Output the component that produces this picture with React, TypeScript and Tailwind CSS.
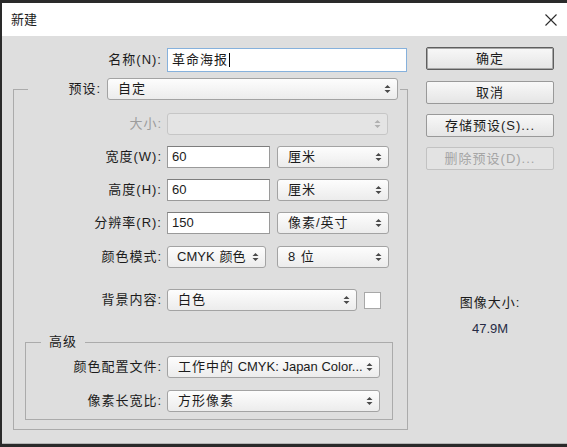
import React from 'react';

const Arrows = ({ disabled = false }: { disabled?: boolean }) => (
  <svg width="7" height="10" viewBox="0 0 7 10" className="shrink-0">
    <path d="M0.5 4 L3.5 1 L6.5 4Z M0.5 6 L3.5 9 L6.5 6Z" fill={disabled ? '#b0b0b0' : '#4a4a4a'} />
  </svg>
);

const Select = ({ className = '', children, disabled = false }: { className?: string; children?: React.ReactNode; disabled?: boolean }) => (
  <div
    className={`flex h-[22px] shrink-0 items-center justify-between rounded-[3px] border pl-[10px] pr-[6px] ${
      disabled
        ? 'border-[#c6c6c6] bg-[#e4e4e4]'
        : 'border-[#a3a3a3] bg-gradient-to-b from-[#fdfdfd] to-[#ececec]'
    } ${className}`}
  >
    <span className="truncate tracking-[1px]">{children}</span>
    <Arrows disabled={disabled} />
  </div>
);

const Input = ({ className = '', value }: { className?: string; value: string }) => (
  <div className={`flex h-[22px] shrink-0 items-center border border-[#9a9a9a] border-t-[#7d7d7d] bg-white pl-[4px] ${className}`}>
    {value}
  </div>
);

const Label = ({ className = '', children, muted = false }: { className?: string; children: React.ReactNode; muted?: boolean }) => (
  <div className={`shrink-0 text-right tracking-[1px] ${muted ? 'text-[#9c9c9c]' : ''} ${className}`}>{children}</div>
);

const Button = ({ children, primary = false, disabled = false, className = '' }: { children: React.ReactNode; primary?: boolean; disabled?: boolean; className?: string }) => (
  <div
    className={`flex h-[23px] w-[128px] items-center justify-center rounded-[2px] border tracking-[1px] ${
      disabled
        ? 'border-[#c2c2c2] bg-[#e3e3e3] text-[#a5a5a5]'
        : primary
        ? 'border-[#5e5e5e] bg-gradient-to-b from-[#f8f8f8] to-[#e5e5e5] shadow-[inset_0_0_0_1px_#a8a8a8]'
        : 'border-[#999999] bg-gradient-to-b from-[#f8f8f8] to-[#e5e5e5]'
    } ${className}`}
  >
    {children}
  </div>
);

export default function App() {
  return (
    <div className="h-[447px] w-[567px] bg-[#2a2a2a] pb-[3px] pl-[2px] pt-[3px] font-['Liberation_Sans','Noto_Sans_CJK_SC',sans-serif] text-[13px] text-[#1b1b1b]">
      <div className="flex h-full flex-col border-b border-[#b5b5b5] bg-[#dedede]">
        {/* title bar */}
        <div className="flex h-[33px] shrink-0 items-center justify-between bg-white pl-[9px] pr-[10px]">
          <span className="tracking-[0px]">新建</span>
          <svg width="12" height="12" viewBox="0 0 12 12">
            <path d="M0.5 0.5 L11.5 11.5 M11.5 0.5 L0.5 11.5" stroke="#2b2b2b" strokeWidth="1.1" />
          </svg>
        </div>

        <div className="flex pt-[11px]">
          {/* left column */}
          <div className="w-[406px]">
            <div className="mt-[1px] flex items-center">
              <Label className="w-[160px]">名称(N):</Label>
              <div className="ml-[5px] flex h-[24px] w-[240px] items-center border border-[#86b1dc] bg-white pl-[4px] tracking-[1px]">
                革命海报
                <span className="ml-[1px] inline-block h-[14px] w-[1px] bg-black" />
              </div>
            </div>

            <fieldset className="ml-[11px] mt-[6px] w-[395px] border border-[#ababab] pb-[9px] pt-[13px]">
              <legend className="ml-[14px] flex items-center px-[2px]">
                <Label className="w-[71px]">预设:</Label>
                <Select className="ml-[6px] w-[291px]">自定</Select>
              </legend>

              <div className="flex items-center">
                <Label muted className="w-[148px]">大小:</Label>
                <Select disabled className="ml-[5px] w-[221px]" />
              </div>

              <div className="mt-[11px] flex items-center">
                <Label className="w-[148px]">宽度(W):</Label>
                <Input className="ml-[5px] w-[103px]" value="60" />
                <Select className="ml-[7px] w-[112px]">厘米</Select>
              </div>

              <div className="mt-[11px] flex items-center">
                <Label className="w-[148px]">高度(H):</Label>
                <Input className="ml-[5px] w-[103px]" value="60" />
                <Select className="ml-[7px] w-[112px]">厘米</Select>
              </div>

              <div className="mt-[11px] flex items-center">
                <Label className="w-[148px]">分辨率(R):</Label>
                <Input className="ml-[5px] w-[103px]" value="150" />
                <Select className="ml-[7px] w-[112px]">像素/英寸</Select>
              </div>

              <div className="mt-[12px] flex items-center">
                <Label className="w-[148px]">颜色模式:</Label>
                <Select className="ml-[5px] w-[99px] !pl-[9px]">
                  <span className="tracking-[0px]">CMYK</span>
                  <span className="ml-[5px] tracking-[0px]">颜色</span>
                </Select>
                <Select className="ml-[11px] w-[112px]">8 位</Select>
              </div>

              <div className="mt-[21px] flex items-center">
                <Label className="w-[148px]">背景内容:</Label>
                <Select className="ml-[5px] w-[190px]">白色</Select>
                <div className="ml-[7px] h-[17px] w-[17px] border border-[#a8a8a8] bg-white" />
              </div>

              <fieldset className="ml-[11px] mt-[22px] w-[368px] border border-[#ababab] pb-[7px] pt-[5px]">
                <legend className="ml-[15px] px-[8px] leading-[18px] tracking-[1px]">高级</legend>
                <div className="flex items-center">
                  <Label className="w-[136px]">颜色配置文件:</Label>
                  <Select className="ml-[5px] w-[213px]">
                    工作中的<span className="tracking-[0px]"> CMYK: Japan Color...</span>
                  </Select>
                </div>
                <div className="mt-[12px] flex items-center">
                  <Label className="w-[136px]">像素长宽比:</Label>
                  <Select className="ml-[5px] w-[213px]">方形像素</Select>
                </div>
              </fieldset>
            </fieldset>
          </div>

          {/* right column */}
          <div className="ml-[18px] flex w-[128px] flex-col">
            <Button primary>确定</Button>
            <Button className="mt-[11px]">取消</Button>
            <Button className="mt-[10px]">存储预设(S)...</Button>
            <Button disabled className="mt-[10px]">删除预设(D)...</Button>
            <div className="mt-[124px] text-center leading-[17px] tracking-[1px]">图像大小:</div>
            <div className="mt-[9px] text-center leading-[17px] text-[#262b45]">47.9M</div>
          </div>
        </div>
      </div>
    </div>
  );
}
